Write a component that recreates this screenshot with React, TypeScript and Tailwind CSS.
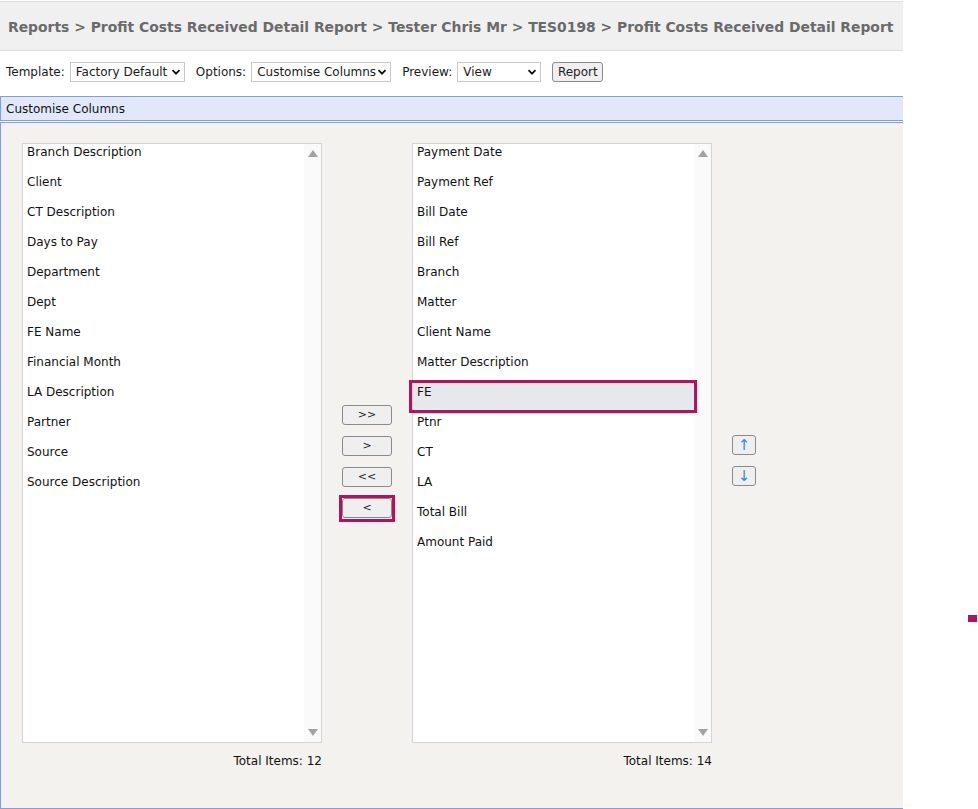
import { ReactNode } from "react";

const available = [
  "Branch Description",
  "Client",
  "CT Description",
  "Days to Pay",
  "Department",
  "Dept",
  "FE Name",
  "Financial Month",
  "LA Description",
  "Partner",
  "Source",
  "Source Description",
];

const selected = [
  "Payment Date",
  "Payment Ref",
  "Bill Date",
  "Bill Ref",
  "Branch",
  "Matter",
  "Client Name",
  "Matter Description",
  "FE",
  "Ptnr",
  "CT",
  "LA",
  "Total Bill",
  "Amount Paid",
];

const font = { fontFamily: "'DejaVu Sans', Verdana, sans-serif" };

function Chevron() {
  return (
    <svg width="10" height="10" viewBox="0 0 10 10" className="shrink-0">
      <path d="M1.5 3.2 L5 6.7 L8.5 3.2" fill="none" stroke="#111" strokeWidth="1.8" />
    </svg>
  );
}

function FakeSelect({ value, width }: { value: string; width: string }) {
  return (
    <div
      className={`${width} h-[20px] flex items-center justify-between bg-white border border-[#c9c9c9] pl-[5px] pr-[3px] text-[12px] text-[#1a1a1a]`}
    >
      <span className="whitespace-nowrap">{value}</span>
      <Chevron />
    </div>
  );
}

function SmallButton({
  children,
  className = "",
  color = "text-[#222]",
}: {
  children: ReactNode;
  className?: string;
  color?: string;
}) {
  return (
    <div
      className={`h-[20px] flex items-center justify-center bg-[#efefef] border border-[#8a8a8a] rounded-[3px] text-[11px] ${color} ${className}`}
    >
      {children}
    </div>
  );
}

function ListBox({ items, highlight }: { items: string[]; highlight?: string }) {
  return (
    <div className="relative w-[300px] h-[600px] bg-white border border-[#d4d4d4] flex">
      <div className="flex-1 overflow-hidden">
        {items.map((it) => (
          <div
            key={it}
            className={`h-[30px] pl-[4px] leading-[16px] text-[12px] text-[#111] ${
              it === highlight ? "bg-[#e6e8ec]" : ""
            }`}
          >
            {it}
          </div>
        ))}
      </div>
      {/* scrollbar track */}
      <div className="w-[17px] bg-[#fafafa] flex flex-col items-center justify-between py-[6px]">
        <svg width="10" height="7" viewBox="0 0 10 7">
          <path d="M0 7 L5 0 L10 7 Z" fill="#a3a3a3" />
        </svg>
        <svg width="10" height="7" viewBox="0 0 10 7">
          <path d="M0 0 L5 7 L10 0 Z" fill="#a3a3a3" />
        </svg>
      </div>
    </div>
  );
}

export default function App() {
  return (
    <div className="relative w-[978px] h-[809px] bg-white" style={font}>
      <div className="w-[903px]">
        {/* breadcrumb header */}
        <div className="mt-[1px] h-[50px] bg-[#f0f0f0] border-t border-b border-[#dedede] flex items-center pt-[3px] pl-[8px] text-[13.9px] font-bold text-[#6a6a6a] whitespace-nowrap">
          Reports &gt; Profit Costs Received Detail Report &gt; Tester Chris Mr &gt; TES0198 &gt; Profit Costs Received Detail Report
        </div>

        {/* toolbar */}
        <div className="h-[41px] flex items-center pl-[6px] text-[12px] text-[#1a1a1a]">
          <span className="mr-[5px]">Template:</span>
          <FakeSelect value="Factory Default" width="w-[115px]" />
          <span className="ml-[11px] mr-[5px]">Options:</span>
          <FakeSelect value="Customise Columns" width="w-[140px]" />
          <span className="ml-[11px] mr-[5px]">Preview:</span>
          <FakeSelect value="View" width="w-[84px]" />
          <SmallButton className="ml-[11px] w-[51px] h-[19px] text-[12px]">Report</SmallButton>
        </div>

        <div className="mt-[4px] h-[25px] bg-[#e0e8f9] border border-r-0 border-[#7f9fe0] flex items-center pl-[5px] text-[12px] text-[#111]">
          Customise Columns
        </div>

        {/* column chooser panel */}
        <div className="mt-[1px] h-[687px] bg-[#f3f2ee] border border-r-0 border-[#7f9fe0] pt-[20px] pl-[21px] flex">
          <div className="flex flex-col items-end">
            <ListBox items={available} />
            <div className="mt-[9px] text-[12px] text-[#111]">Total Items: 12</div>
          </div>

          <div className="ml-[20px] w-[50px] pt-[262px] flex flex-col gap-[11px]">
            <SmallButton>&gt;&gt;</SmallButton>
            <SmallButton>&gt;</SmallButton>
            <SmallButton>&lt;&lt;</SmallButton>
            <div className="relative">
              <SmallButton>&lt;</SmallButton>
              <div className="absolute -left-[3px] -top-[3px] w-[56px] h-[27px] border-[3px] border-[#b3125d]" />
            </div>
          </div>

          <div className="ml-[20px] flex flex-col items-end relative">
            <ListBox items={selected} highlight="FE" />
            <div className="mt-[9px] text-[12px] text-[#111]">Total Items: 14</div>
            <div className="absolute left-[-3px] top-[237px] w-[288px] h-[33px] border-[3px] border-[#b3125d]" />
          </div>

          <div className="ml-[20px] w-[24px] pt-[292px] flex flex-col gap-[11px]">
            <SmallButton className="text-[15px]" color="text-[#2f8de4]">↑</SmallButton>
            <SmallButton className="text-[15px]" color="text-[#2f8de4]">↓</SmallButton>
          </div>
        </div>
      </div>

      <div className="absolute left-[968px] top-[614px] w-[9px] h-[7px] bg-[#b3125d]" />
    </div>
  );
}
